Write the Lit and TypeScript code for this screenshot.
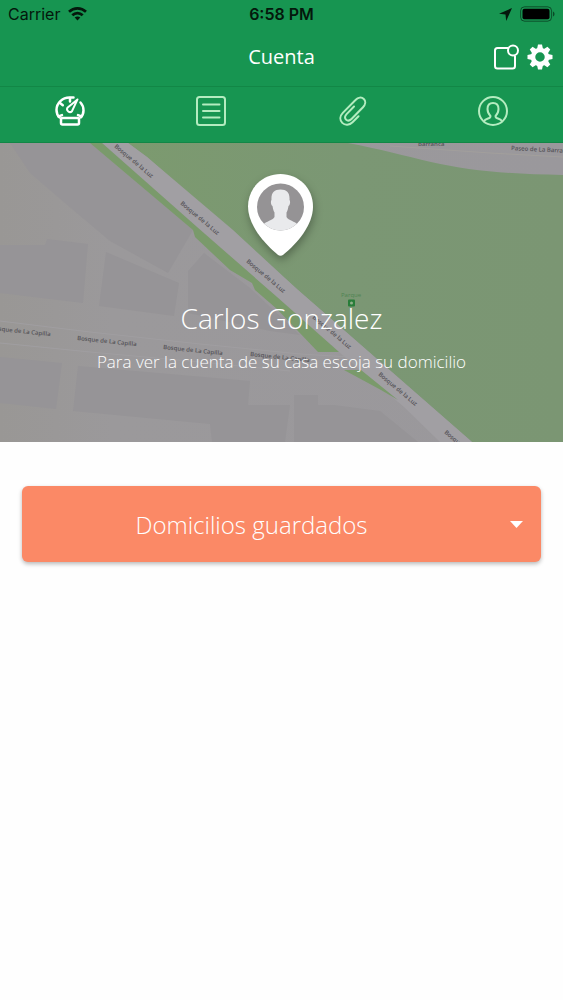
import { LitElement, html, svg, css } from "lit";
import { customElement, state } from "lit/decorators.js";
import { classMap } from "lit/directives/class-map.js";

const gauge = svg`
  <path d="M4.500 21.500C2.600 19.500 1.500 17 1.500 14 1.500 6.800 7.500 1.500 14.500 1.500h4"/>
  <path d="M25.500 6.500c2 2.200 3 4.800 3 8 0 3-1 5.200-2.900 7"/>
  <path d="M15 2v3.500M5 7l2.800 2.200M3.500 20.500l3.500-1.400M26.500 20.500L23 19.100"/>
  <path d="M22.500 3.400L12.400 11.800a2.900 2.900 0 0 0 4.600 3.400z" stroke-width="2"/>
  <rect x="6" y="22" width="18" height="6.500" rx="1.500"/>`;

const list = svg`
  <rect x="1" y="1" width="28" height="28" rx="2.500"/>
  <path d="M7 8.500h16.500M7 15h16.500M7 21.500h16.500"/>`;

const clip = svg`
  <path d="M21.500 20.200l-6 6c-3 3-7.300 3.500-10.200.7-2.800-2.900-2.400-7 .5-10L18.500 4C21 1.300 24.500.7 26.800 3c2.200 2.200 1.700 5.600-.8 8.200L14.500 23c-1.800 1.800-4 2.100-5.500.6s-1.200-3.700.6-5.500l7.400-7.600"/>`;

const person = svg`
  <circle cx="15" cy="15" r="14"/>
  <path d="M6 25.500c.6-1.800 2-2.300 4-3 1.600-.5 2.500-1 2.500-2.600-1.900-1.600-3-4-3-6.900 0-4 2-6 5.500-6s5.500 2 5.500 6c0 2.900-1.100 5.300-3 6.900 0 1.600.9 2.100 2.500 2.600 2 .7 3.400 1.200 4 3"/>`;

const tabs = [
  { label: "Cuenta", icon: gauge },
  { label: "Movimientos", icon: list },
  { label: "Adjuntos", icon: clip },
  { label: "Perfil", icon: person },
];

const luz = [[114, 4], [180, 61], [246, 119], [312, 175], [378, 232], [444, 290]];
const capilla = [[-9, 187], [77, 197], [163, 206], [250, 213]];

@customElement("street-map")
class StreetMap extends LitElement {
  static styles = css`
    :host { display: block; }
    .map { display: block; width: 100%; height: 100%; }
    .label { font-family: "Open Sans", sans-serif; font-size: 6px; font-weight: 600; fill: #555358; }
    .park { fill: #4f8452; font-weight: 400; }
  `;

  render() {
    return html`<svg class="map" viewBox="0 0 563 299" preserveAspectRatio="xMidYMid slice" aria-hidden="true">
      <defs>
        <linearGradient id="ground"><stop stop-color="#999795"/><stop offset=".2" stop-color="#9b999b"/><stop offset="1" stop-color="#9a989c"/></linearGradient>
        <linearGradient id="grass"><stop stop-color="#7c9a6f"/><stop offset=".5" stop-color="#7b9774"/><stop offset="1" stop-color="#7b9673"/></linearGradient>
      </defs>
      <rect width="563" height="299" fill="url(#ground)"/>
      <g fill="#969497">
        <path d="M10 0H90L193 87 168 130 110 98 72 66 30 30z"/>
        <path d="M0 102L45 102 47 96 88 101 83 160 0 150zM106 109L179 140 174 173 99 163zM188 128L204 110 250 145 300 192 270 188 188 170z"/>
        <path d="M0 214L62 220 56 266 0 260zM78 223L250 238 248 262 290 262 285 299 212 299 210 281 73 268zM294 252H318V262H334V299H294zM334 262L380 268 418 299H332z"/>
      </g>
      <path d="M0 178L90 189 200 201 300 211 350 214M0 200L90 209 200 219 290 228" fill="none" stroke="#a09ea1"/>
      <path d="M128 0H348C380 6 405 13 431 19 470 28 510 31 563 32V299H472L298 147 147 14z" fill="url(#grass)"/>
      <path d="M102 0H128L147 14 233 87 298 147 472 299H440L404 264 339 209 277 154 197 84z" fill="#a19fa3"/>
      <g fill="#7a9a6b">
        <path d="M90 0H102L197 84 277 154 339 209H318L277 166 255 147 252 140 230 127 195 94 193 87z"/>
        <path d="M344 227H361L398 257 381 247z"/>
      </g>
      <path d="M390 3L490 10 563 14" fill="none" stroke="#a29f9c"/>
      ${luz.map(([x, y]) => svg`<text class="label" transform="translate(${x} ${y}) rotate(40)">Bosque de la Luz</text>`)}
      ${capilla.map(([x, y]) => svg`<text class="label" transform="translate(${x} ${y}) rotate(6)">Bosque de La Capilla</text>`)}
      <text class="label" transform="translate(511 7) rotate(3)">Paseo de La Barranca</text>
      <text class="label" x="418" y="3">Barranca</text>
      <text class="label park" x="341" y="154">Parque</text>
      <rect x="348" y="156.500" width="7" height="7" rx="1" fill="#287d39"/>
      <circle cx="351.500" cy="160" r="1.500" fill="#8eaf88"/>
    </svg>`;
  }
}

@customElement("app-root")
class AppRoot extends LitElement {
  static styles = css`
    :host { display: block; min-height: 100vh; background: #fefefe; font-family: "Open Sans", sans-serif; color: #fff; }
    .top { background: #179551; border-bottom: 1px solid #128746; }
    .status { display: grid; grid-template-columns: 1fr auto 1fr; align-items: center; height: 28px; padding: 0 8px; color: #04180c; font-family: Inter, sans-serif; font-size: 16px; }
    .carrier, .power { display: flex; align-items: center; gap: 8px; }
    .power { justify-content: flex-end; }
    .time { font-weight: 600; }
    .nav { display: grid; grid-template-columns: 1fr auto 1fr; align-items: center; height: 59px; padding: 0 10px; border-bottom: 1px solid #128746; box-sizing: border-box; }
    .title { grid-column: 2; margin: 0; font-size: 20px; line-height: 28px; font-weight: 400; }
    .actions { display: flex; justify-content: flex-end; gap: 8px; }
    button { display: flex; justify-content: center; align-items: center; padding: 0; border: 0; background: none; color: inherit; cursor: pointer; }
    svg { display: block; flex: none; }
    .tabs { display: grid; grid-template-columns: repeat(4, 1fr); }
    .tab { height: 55px; padding-bottom: 7px; color: #b4ecc0; }
    .tab.active { color: #fff; }
    .hero { display: grid; overflow: hidden; }
    .hero > * { grid-area: 1 / 1; }
    .backdrop { height: 0; min-height: 100%; }
    .profile { position: relative; display: flex; flex-direction: column; align-items: center; padding: 24px 16px 68px; text-align: center; }
    .pin { overflow: visible; filter: drop-shadow(1px 4px 4px rgb(0 0 0 / 30%)); }
    .name { margin: 40px 0 0; font-size: 28px; line-height: 40px; font-weight: 300; }
    .hint { margin: 12px 0 0; font-size: 17px; line-height: 24px; font-weight: 300; }
    .content { padding: 44px 22px; }
    .picker { display: grid; align-items: center; }
    .picker > * { grid-area: 1 / 1; }
    .select { appearance: none; width: 100%; height: 76px; padding: 0 60px 0 0; border: 0; border-radius: 6px; background: #fb8966; box-shadow: 0 2px 4px rgb(0 0 0 / 28%); color: #fff; font: 300 24px "Open Sans", sans-serif; text-align: center; text-align-last: center; }
    .arrow { justify-self: end; margin-right: 18px; pointer-events: none; }
  `;

  @state() private active = 0;

  render() {
    return html`
      <header class="top">
        <div class="status">
          <div class="carrier">
            <span>Carrier</span>
            <svg width="19" height="14" viewBox="0 0 19 14" aria-hidden="true">
              <g fill="none" stroke="currentColor" stroke-width="2.700"><path d="M1 4.800C5.800.2 13.200.2 18 4.800M4.300 8.200c3-2.900 7.400-2.900 10.400 0"/></g>
              <path d="M6.700 10.500c1.600-1.500 4-1.500 5.600 0L9.500 13.400z" fill="currentColor"/>
            </svg>
          </div>
          <span class="time">6:58 PM</span>
          <div class="power">
            <svg width="13" height="13" viewBox="0 0 13 13" aria-hidden="true"><path d="M13 0L7.200 13 6.500 6.500 0 5.800z" fill="currentColor"/></svg>
            <svg width="35" height="16" viewBox="0 0 35 16" aria-hidden="true">
              <rect x=".6" y=".8" width="31" height="14.400" rx="4" fill="none" stroke="currentColor" stroke-opacity=".55"/>
              <rect x="2.500" y="2.700" width="27" height="10.600" rx="2" fill="#000"/>
              <path d="M33 5.500c2 .8 2 4.200 0 5z" fill="currentColor" fill-opacity=".6"/>
            </svg>
          </div>
        </div>
        <div class="nav">
          <h1 class="title">Cuenta</h1>
          <div class="actions">
            <button aria-label="Notificaciones">
              <svg width="26" height="26" viewBox="0 0 26 26" fill="none" stroke="currentColor" stroke-width="2">
                <path d="M15 4H4.500a2.500 2.500 0 0 0-2.500 2.500v15.500A2.500 2.500 0 0 0 4.500 24.500h15a2.500 2.500 0 0 0 2.500-2.500V12"/><circle cx="20" cy="6.500" r="5"/>
              </svg>
            </button>
            <button aria-label="Ajustes">
              <svg width="26" height="26" viewBox="-13 -13 26 26">
                <circle r="7" fill="none" stroke="currentColor" stroke-width="4.500"/>
                ${[0, 45, 90, 135, 180, 225, 270, 315].map(a => svg`<path d="M-3-8L-2-12.500H2L3-8z" fill="currentColor" transform="rotate(${a})"/>`)}
              </svg>
            </button>
          </div>
        </div>
        <nav class="tabs">
          ${tabs.map((t, i) => html`
            <button class=${classMap({ tab: true, active: i === this.active })} aria-label=${t.label} @click=${() => (this.active = i)}>
              <svg width="30" height="30" viewBox="0 0 30 30" fill="none" stroke="currentColor" stroke-width=${i === 0 ? 2.5 : 2} stroke-linecap="round" stroke-linejoin="round">${t.icon}</svg>
            </button>`)}
        </nav>
      </header>
      <section class="hero">
        <street-map class="backdrop"></street-map>
        <div class="profile">
          <svg class="pin" width="65" height="91" viewBox="0 0 65 91" aria-hidden="true">
            <path d="M31.500 7C13.500 7-1 21-1 39.500-1 58 15 76 28.500 87.500c2 1.600 4 1.600 6 0C48.500 76 64 58 64 39.500 64 21 49.500 7 31.500 7z" fill="#fff"/>
            <clipPath id="face"><circle cx="31.500" cy="40" r="23.500"/></clipPath>
            <g clip-path="url(#face)">
              <rect x="7" y="15" width="50" height="50" fill="#959395"/>
              <path d="M31.500 22.500c-6.500 0-9.500 3.500-9 10.500-1.200 1-.5 5 1 6 .5 3 1 5 2 6.500v4.500c-2 3.500-8 4-12 8V66h36v-8c-4-4-10-4.500-12-8v-4.500c1-1.500 1.500-3.500 2-6.500 1.500-1 2.200-5 1-6 .5-7-2.500-10.500-9-10.500z" fill="#e9eaec"/>
            </g>
          </svg>
          <h2 class="name">Carlos Gonzalez</h2>
          <p class="hint">Para ver la cuenta de su casa escoja su domicilio</p>
        </div>
      </section>
      <main class="content">
        <div class="picker">
          <select class="select" aria-label="Domicilios guardados"><option>Domicilios guardados</option></select>
          <svg class="arrow" width="13" height="7" viewBox="0 0 13 7" aria-hidden="true"><path d="M0 0h13L6.500 7z" fill="#fff"/></svg>
        </div>
      </main>`;
  }
}
